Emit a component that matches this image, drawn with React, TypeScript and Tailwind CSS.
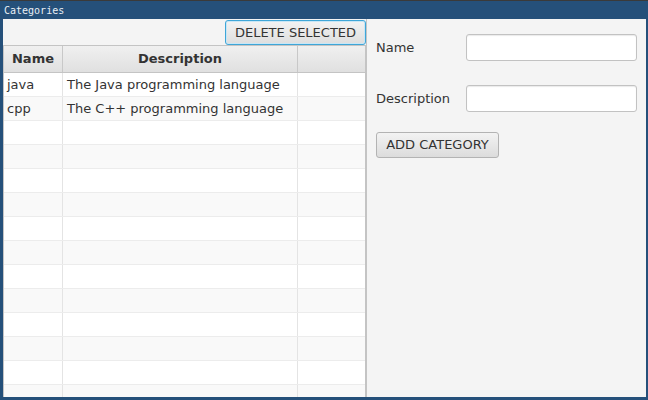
import React from "react";

const rows = [
  { name: "java", desc: "The Java programming language" },
  { name: "cpp", desc: "The C++ programming language" },
];

export default function App() {
  const allRows = Array.from({ length: 14 }, (_, i) => rows[i] ?? null);
  return (
    <div className="w-[648px] h-[400px] flex flex-col bg-[#25507a] overflow-hidden" style={{ fontFamily: "'DejaVu Sans', sans-serif" }}>
      <div className="h-[1px] bg-[#3a3a3a]" />
      <div className="h-[18px] flex items-center px-[4px] text-[10px] text-[#e8eef4]" style={{ fontFamily: "'DejaVu Sans Mono', monospace" }}>
        Categories
      </div>
      <div className="flex-1 min-h-0 ml-[3px] mr-[2px] mb-[3px] bg-[#f4f4f4] flex">
        <div className="w-[363px] flex flex-col min-h-0">
          <div className="h-[26px] flex justify-end items-start pt-[1px] pr-[0px]">
            <button className="h-[25px] w-[141px] rounded-[3px] border border-[#3fa6d8] bg-gradient-to-b from-[#f3f3f3] to-[#dedede] text-[13px] text-[#333] shadow-[inset_0_0_0_1px_#c9e6f5] flex items-center justify-center">
              DELETE SELECTED
            </button>
          </div>
          <div className="flex-1 min-h-0 overflow-hidden border-l border-r border-t border-[#c4c4c4] bg-white flex flex-col">
            <div className="h-[27px] flex shrink-0 border-b border-[#c4c4c4] bg-gradient-to-b from-[#f0f0f0] to-[#e0e0e0] text-[13px] font-bold text-[#333]">
              <div className="w-[59px] border-r border-[#c8c8c8] flex items-center justify-center">Name</div>
              <div className="w-[235px] border-r border-[#c8c8c8] flex items-center justify-center">Description</div>
              <div className="flex-1" />
            </div>
            {allRows.map((r, i) => (
              <div key={i} className={`h-[24px] shrink-0 flex border-b border-[#ececec] text-[13px] text-[#333] ${i % 2 === 0 ? "bg-white" : "bg-[#f9f9f9]"}`}>
                <div className="w-[59px] border-r border-[#e4e4e4] flex items-center pl-[3px]">{r?.name}</div>
                <div className="w-[235px] border-r border-[#e4e4e4] flex items-center pl-[4px]">{r?.desc}</div>
                <div className="flex-1" />
              </div>
            ))}
          </div>
        </div>
        <div className="flex-1 border-l border-[#c4c4c4] pl-[9px] pr-[9px] pt-[15px] flex flex-col">
          <div className="flex items-center h-[27px]">
            <div className="w-[90px] text-[13px] text-[#333]">Name</div>
            <div className="flex-1 h-[27px] rounded-[3px] border border-[#c2c2c2] bg-white shadow-[inset_0_1px_1px_#eaeaea]" />
          </div>
          <div className="flex items-center h-[27px] mt-[24px]">
            <div className="w-[90px] text-[13px] text-[#333]">Description</div>
            <div className="flex-1 h-[27px] rounded-[3px] border border-[#c2c2c2] bg-white shadow-[inset_0_1px_1px_#eaeaea]" />
          </div>
          <div className="mt-[20px]">
            <button className="h-[26px] w-[123px] rounded-[3px] border border-[#b3b3b3] bg-gradient-to-b from-[#f3f3f3] to-[#dcdcdc] text-[13px] text-[#333] flex items-center justify-center">
              ADD CATEGORY
            </button>
          </div>
        </div>
      </div>
    </div>
  );
}
